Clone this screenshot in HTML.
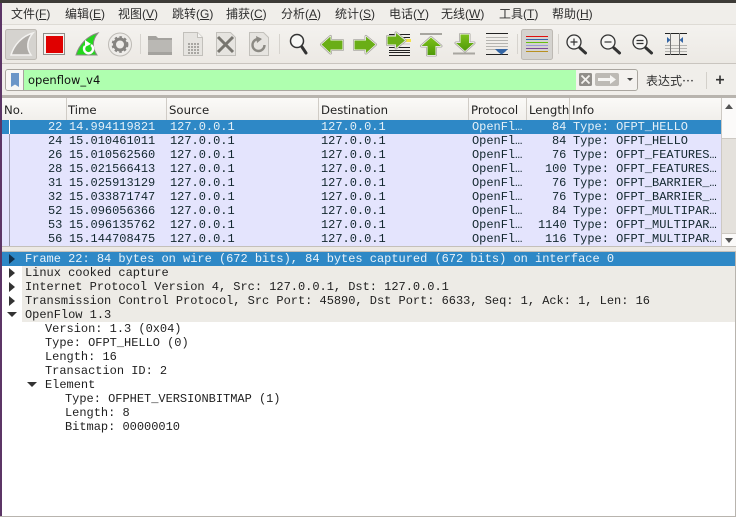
<!DOCTYPE html>
<html><head><meta charset="utf-8">
<style>
*{box-sizing:border-box}
html,body{margin:0;padding:0}
body{width:736px;height:517px;overflow:hidden;position:relative;background:#fff;font-family:"Liberation Sans","Noto Sans CJK SC",sans-serif}
.a{position:absolute}
#menu span{position:absolute;top:3px;font-size:12px;line-height:16px;color:#2e2e2e;white-space:nowrap}
#menu u{text-decoration:underline;text-underline-offset:1px}
.h{position:absolute;top:98px;height:22px;font-family:"DejaVu Sans",sans-serif;font-size:11.7px;line-height:24px;color:#222;background:linear-gradient(#fbfaf8,#f1efeb);border-right:1px solid #d0ccc6;white-space:nowrap;overflow:hidden}
.r{position:absolute;left:2px;width:719px;height:14px;background:#e4e4fd;font:12px/14px "Liberation Mono",monospace;letter-spacing:-.018px;color:#12272e}
.r.s{background:#2e88c6;color:#e6f1f8}
.r span{position:absolute;top:0;white-space:pre}
.d{position:absolute;font:12px/14px "Liberation Mono",monospace;letter-spacing:-.018px;color:#1f1f1f;white-space:pre;height:14px}
.tri{position:absolute;width:0;height:0}
.rt{border-left:6px solid #333;border-top:5px solid transparent;border-bottom:5px solid transparent;left:9px}
.dn{border-top:5px solid #333;border-left:5px solid transparent;border-right:5px solid transparent}
.o{fill:none;stroke:#a9a7a1;stroke-width:3;stroke-linejoin:round}
.w{fill:none;stroke:#f6f5f2;stroke-width:1.400;stroke-linejoin:round}
</style></head><body>
<div class="a" style="left:0;top:0;width:736px;height:3px;background:#3d3b37"></div>
<div class="a" style="left:0;top:3px;width:2px;height:514px;background:#5c3566"></div>
<div class="a" id="menu" style="left:2px;top:3px;width:734px;height:22px;background:#f0eeea">
<span style="left:9px">文件(<u>F</u>)</span><span style="left:63px">编辑(<u>E</u>)</span><span style="left:116px">视图(<u>V</u>)</span><span style="left:170px">跳转(<u>G</u>)</span><span style="left:224px">捕获(<u>C</u>)</span><span style="left:279px">分析(<u>A</u>)</span><span style="left:333px">统计(<u>S</u>)</span><span style="left:387px">电话(<u>Y</u>)</span><span style="left:439px">无线(<u>W</u>)</span><span style="left:497px">工具(<u>T</u>)</span><span style="left:550px">帮助(<u>H</u>)</span>
</div>
<div class="a" style="left:2px;top:24px;width:734px;height:40px;background:linear-gradient(#f4f2ef,#ece9e4);border-top:1px solid #dedbd5;border-bottom:1px solid #c9c5bf"></div>

<svg class="a" style="left:0;top:25px" width="736" height="38" viewBox="0 25 736 38">
<defs>
<path id="back" d="M321.500 44.500 L330.500 36.500 V40.500 H342.500 V49.500 H330.500 V53 Z"/>
<path id="fwd" d="M375.500 44.500 L366 36.500 V40.500 H354.500 V49.500 H366 V53 Z"/>
<path id="goto" d="M405 40.500 L396 33 V36.500 H387.500 V44.500 H396 V48 Z"/>
<path id="first" d="M431 37.500 L421.500 46 H427.500 V55 H435.500 V46 H441 Z"/>
<path id="last" d="M465 51 L456 43 H460.500 V34.500 H469 V43 H474 Z"/>
<linearGradient id="g1" x1="0" y1="0" x2="0" y2="1"><stop offset="0" stop-color="#7cc01c"/><stop offset="1" stop-color="#4f9a08"/></linearGradient>
</defs>
<!-- shark selected -->
<rect x="5.500" y="29.500" width="31" height="30" rx="2" fill="#d5d3cf" stroke="#bdb9b3"/>
<path d="M11 55 C14 45 22 36 33 33 C27 40 26 48 31 55 Z" fill="#aeaba7" stroke="#f3f2f0" stroke-width="1.500"/>
<!-- stop -->
<rect x="43.500" y="33.500" width="21" height="21" fill="#f4f2ef" stroke="#8f8c88"/>
<rect x="46" y="36" width="17" height="17" fill="#e00000"/>
<!-- restart -->
<path d="M76 55 C79 45 87 36 98 33 C92 40 92 48 97 55 Z" fill="#22d81c" stroke="#8a8a84" stroke-width="1"/>
<path d="M85 46 a4.500 4.500 0 1 0 6 -1" fill="none" stroke="#fff" stroke-width="2.400"/>
<path d="M85 40 l6 4 -6 3z" fill="#fff"/>
<!-- gear -->
<circle cx="120" cy="44.500" r="11.500" fill="#eeece9" stroke="#bdbab5" stroke-width="1"/>
<circle cx="120" cy="44.500" r="5.500" fill="none" stroke="#868481" stroke-width="3"/>
<circle cx="120" cy="44.500" r="7.600" fill="none" stroke="#868481" stroke-width="1.600" stroke-dasharray="2.600 2.400"/>
<line x1="140.500" y1="34" x2="140.500" y2="54" stroke="#d6d3ce"/>
<!-- folder -->
<path d="M148 36 h8 l2 2 h14 v5 h-24z" fill="#a4a29e"/>
<rect x="148" y="40" width="24" height="15" fill="#bab8b4"/>
<rect x="148" y="52" width="24" height="3" fill="#a4a29e"/>
<!-- file -->
<path d="M183.500 32.500 h14 l5 5 v18 h-19z" fill="#e6e4e0" stroke="#c2c0bb"/>
<path d="M197.500 32.500 v5 h5" fill="#f5f4f2" stroke="#c2c0bb"/>
<path d="M188 44 h11 M188 47 h11 M188 50 h11 M188 53 h11" stroke="#a8a6a2" stroke-width="2" stroke-dasharray="2 1"/>
<!-- close file -->
<path d="M216.500 32.500 h14 l5 5 v18 h-19z" fill="#e6e4e0" stroke="#c2c0bb"/>
<path d="M218 37 L233 52 M233 37 L218 52" stroke="#77756f" stroke-width="3"/>
<!-- reload file -->
<path d="M249.500 32.500 h14 l5 5 v18 h-19z" fill="#e6e4e0" stroke="#c2c0bb"/>
<circle cx="258.500" cy="45" r="6" fill="none" stroke="#8c8a84" stroke-width="2.400" stroke-dasharray="30 8"/>
<path d="M256 36 l6 3 -5 4z" fill="#8c8a84"/>
<line x1="279.500" y1="34" x2="279.500" y2="54" stroke="#d6d3ce"/>
<!-- search -->
<circle cx="297" cy="41" r="6.500" fill="#f8f8f6" stroke="#333" stroke-width="1.500"/>
<path d="M302 47 L306 53" stroke="#333" stroke-width="3" stroke-linecap="round"/>
<!-- back -->
<use href="#back" class="o"/><use href="#back" class="w"/><use href="#back" fill="#6aae16"/>
<!-- forward -->
<use href="#fwd" class="o"/><use href="#fwd" class="w"/><use href="#fwd" fill="#6aae16"/>
<!-- goto -->
<path d="M389 34.500 h21 M389 37.500 h21 M389 47.500 h21 M389 50.500 h21 M389 52.500 h21 M389 55.500 h21" stroke="#222" stroke-width="1"/>
<path d="M389 41 h21 M389 44 h21" stroke="#c8c6c2" stroke-width="1"/>
<rect x="404" y="39" width="7" height="3" fill="#f2e24a"/>
<use href="#goto" class="o"/><use href="#goto" class="w"/><use href="#goto" fill="#6aae16"/>
<!-- first -->
<path d="M420 34 h22" stroke="#a8a6a0" stroke-width="2"/>
<use href="#first" class="o"/><use href="#first" class="w"/><use href="#first" fill="url(#g1)"/>
<!-- last -->
<path d="M453 53.500 h22" stroke="#a8a6a0" stroke-width="2"/>
<use href="#last" class="o"/><use href="#last" class="w"/><use href="#last" fill="url(#g1)"/>
<!-- autoscroll -->
<path d="M486 33.500 h22 M486 54.500 h22" stroke="#222" stroke-width="1"/>
<path d="M486 37.500 h22 M486 40.500 h22 M486 43.500 h22 M486 46.500 h22 M486 49.500 h22" stroke="#b5b4b0" stroke-width="1"/>
<path d="M495 49 h13 l-3 3 -3.500 2.500 -3.500 -2.500z" fill="#3566a5"/>
<line x1="517.500" y1="34" x2="517.500" y2="54" stroke="#d6d3ce"/>
<!-- colorize -->
<rect x="521.500" y="29.500" width="31" height="30" rx="2" fill="#d5d3cf" stroke="#bdb9b3"/>
<path d="M526 36.500h22" stroke="#e01010"/><path d="M526 39.500h22" stroke="#3564a8"/>
<path d="M526 42.500h22" stroke="#66c010"/><path d="M526 45.500h22" stroke="#9c9cd8"/><path d="M526 48.500h22" stroke="#7b4a98"/><path d="M526 51.500h22" stroke="#b89020"/>
<line x1="558.500" y1="34" x2="558.500" y2="54" stroke="#d6d3ce"/>
<!-- zoom in -->
<circle cx="574" cy="42" r="7" fill="#f6f5f3" stroke="#333" stroke-width="1.300"/>
<path d="M570.500 42 h7 M574 38.500 v7" stroke="#333" stroke-width="1.200"/>
<path d="M580 48 L585.500 53" stroke="#333" stroke-width="3" stroke-linecap="round"/>
<!-- zoom out -->
<circle cx="608" cy="42" r="7" fill="#f6f5f3" stroke="#333" stroke-width="1.300"/>
<path d="M604.500 42 h7" stroke="#333" stroke-width="1.200"/>
<path d="M614 48 L619.500 53" stroke="#333" stroke-width="3" stroke-linecap="round"/>
<!-- zoom 100 -->
<circle cx="640" cy="42" r="7" fill="#f6f5f3" stroke="#333" stroke-width="1.300"/>
<path d="M636.500 40.500 h7 M636.500 43.500 h7" stroke="#333" stroke-width="1.200"/>
<path d="M646 48 L651.500 53" stroke="#333" stroke-width="3" stroke-linecap="round"/>
<!-- resize -->
<path d="M665 33.500 h22 M665 54.500 h22" stroke="#222" stroke-width="1"/>
<path d="M665 45.500 h22 M665 48.500 h22 M665 51.500 h22" stroke="#b5b4b0"/>
<path d="M670.500 33 V55 M679.500 33 V55" stroke="#777" stroke-width="1"/>
<path d="M667 37 l3.500 3 -3.500 3z M683 37 l-3.500 3 3.500 3z" fill="#3566a5"/>
</svg>

<!-- filter bar -->
<div class="a" style="left:2px;top:64px;width:734px;height:34px;background:#f0eeea;border-bottom:3px solid #b8b4ae"></div>
<div class="a" style="left:5px;top:69px;width:633px;height:22px;border:1px solid #aaa6a0;border-radius:3px;background:#afffaf;overflow:hidden">
<div class="a" style="left:0;top:0;width:18px;height:20px;background:#f8f7f5;border-right:1px solid #a8a49e"></div>
<svg class="a" style="left:4px;top:3px" width="10" height="15"><path d="M1 0 H9 V14 L5 11.500 L1 14Z" fill="#6c96c8"/></svg>
<div class="a" style="left:22px;top:1px;font-family:'DejaVu Sans',sans-serif;font-size:11.500px;line-height:18px;color:#111">openflow_v4</div>
<div class="a" style="left:570px;top:0;width:62px;height:20px;background:#f4f2ef"></div>
<svg class="a" style="left:571px;top:2px" width="60" height="18">
<rect x="2" y="1" width="13" height="13" rx="1.500" fill="#908d89"/>
<path d="M4.500 3.500 L12.500 11.500 M12.500 3.500 L4.500 11.500" stroke="#f4f2ef" stroke-width="1.800"/>
<rect x="18" y="1" width="24" height="13" rx="2" fill="#bdbab5"/>
<path d="M21 6 H33 V3 L39 7.500 L33 12 V9 H21Z" fill="#f6f5f3"/>
<path d="M50 6 h6 l-3 3z" fill="#444"/>
</svg>
</div>
<div class="a" style="left:646px;top:73px;font-size:12px;line-height:17px;color:#2e2e2e;white-space:nowrap">表达式⋯</div>
<div class="a" style="left:706px;top:72px;width:1px;height:17px;background:#d3d0ca"></div>
<svg class="a" style="left:715px;top:75px" width="10" height="10"><path d="M5 0.500 V9 M1 4.700 H9" stroke="#333" stroke-width="1.600"/></svg>

<!-- packet list -->
<div class="h" style="left:2px;width:65px;padding-left:2px">No.</div>
<div class="h" style="left:67px;width:100px;padding-left:1px">Time</div>
<div class="h" style="left:167px;width:152px;padding-left:2px">Source</div>
<div class="h" style="left:319px;width:150px;padding-left:2px">Destination</div>
<div class="h" style="left:469px;width:58px;padding-left:2px">Protocol</div>
<div class="h" style="left:527px;width:43px;padding-left:2px">Length</div>
<div class="h" style="left:570px;width:151px;padding-left:2px;border-right:0">Info</div>
<div class="a" style="left:721px;top:98px;width:15px;height:149px;background:#e4e1dc;border-left:1px solid #cdc9c3"></div>
<div class="a" style="left:722px;top:98px;width:14px;height:41px;background:#fbfaf9;border-bottom:1px solid #cdc9c3"></div>
<div class="a" style="left:722px;top:233px;width:14px;height:14px;background:#fbfaf9;border-top:1px solid #cdc9c3"></div>
<div class="tri" style="left:725px;top:104px;border-bottom:5px solid #555;border-left:4px solid transparent;border-right:4px solid transparent"></div>
<div class="tri" style="left:725px;top:238px;border-top:5px solid #555;border-left:4px solid transparent;border-right:4px solid transparent"></div>

<div class="r s" style="top:120px"><span style="left:46px">22</span><span style="left:67px">14.994119821</span><span style="left:168px">127.0.0.1</span><span style="left:319px">127.0.0.1</span><span style="left:470px">OpenFl…</span><span style="left:550px">84</span><span style="left:571px">Type: OFPT_HELLO</span></div>
<div class="r" style="top:134px"><span style="left:46px">24</span><span style="left:67px">15.010461011</span><span style="left:168px">127.0.0.1</span><span style="left:319px">127.0.0.1</span><span style="left:470px">OpenFl…</span><span style="left:550px">84</span><span style="left:571px">Type: OFPT_HELLO</span></div>
<div class="r" style="top:148px"><span style="left:46px">26</span><span style="left:67px">15.010562560</span><span style="left:168px">127.0.0.1</span><span style="left:319px">127.0.0.1</span><span style="left:470px">OpenFl…</span><span style="left:550px">76</span><span style="left:571px">Type: OFPT_FEATURES…</span></div>
<div class="r" style="top:162px"><span style="left:46px">28</span><span style="left:67px">15.021566413</span><span style="left:168px">127.0.0.1</span><span style="left:319px">127.0.0.1</span><span style="left:470px">OpenFl…</span><span style="left:543px">100</span><span style="left:571px">Type: OFPT_FEATURES…</span></div>
<div class="r" style="top:176px"><span style="left:46px">31</span><span style="left:67px">15.025913129</span><span style="left:168px">127.0.0.1</span><span style="left:319px">127.0.0.1</span><span style="left:470px">OpenFl…</span><span style="left:550px">76</span><span style="left:571px">Type: OFPT_BARRIER_…</span></div>
<div class="r" style="top:190px"><span style="left:46px">32</span><span style="left:67px">15.033871747</span><span style="left:168px">127.0.0.1</span><span style="left:319px">127.0.0.1</span><span style="left:470px">OpenFl…</span><span style="left:550px">76</span><span style="left:571px">Type: OFPT_BARRIER_…</span></div>
<div class="r" style="top:204px"><span style="left:46px">52</span><span style="left:67px">15.096056366</span><span style="left:168px">127.0.0.1</span><span style="left:319px">127.0.0.1</span><span style="left:470px">OpenFl…</span><span style="left:550px">84</span><span style="left:571px">Type: OFPT_MULTIPAR…</span></div>
<div class="r" style="top:218px"><span style="left:46px">53</span><span style="left:67px">15.096135762</span><span style="left:168px">127.0.0.1</span><span style="left:319px">127.0.0.1</span><span style="left:470px">OpenFl…</span><span style="left:536px">1140</span><span style="left:571px">Type: OFPT_MULTIPAR…</span></div>
<div class="r" style="top:232px"><span style="left:46px">56</span><span style="left:67px">15.144708475</span><span style="left:168px">127.0.0.1</span><span style="left:319px">127.0.0.1</span><span style="left:470px">OpenFl…</span><span style="left:543px">116</span><span style="left:571px">Type: OFPT_MULTIPAR…</span></div>
<div class="a" style="left:9px;top:120px;width:1px;height:127px;background:#9a9aae"></div>
<div class="a" style="left:9px;top:120px;width:1px;height:14px;background:#fff"></div>
<div class="a" style="left:2px;top:246px;width:734px;height:6px;background:#ece9e4;border-top:1px solid #c4c0ba;border-bottom:1px solid #c4c0ba"></div>

<!-- details -->
<div class="a" style="left:22px;top:266px;width:713px;height:56px;background:#edebe6"></div>
<div class="a" style="left:2px;top:252px;width:733px;height:14px;background:#2e88c6"></div>
<div class="a" style="left:735px;top:252px;width:1px;height:265px;background:#b8b4ae"></div>
<div class="a" style="left:0;top:516px;width:736px;height:1px;background:#b8b4ae"></div>
<div class="tri rt" style="top:254px;border-left-color:#12304a"></div>
<div class="tri rt" style="top:268px"></div>
<div class="tri rt" style="top:282px"></div>
<div class="tri rt" style="top:296px"></div>
<div class="tri dn" style="left:7px;top:312px"></div>
<div class="d" style="left:25px;top:252px;color:#e8f2f9">Frame 22: 84 bytes on wire (672 bits), 84 bytes captured (672 bits) on interface 0</div>
<div class="d" style="left:25px;top:266px">Linux cooked capture</div>
<div class="d" style="left:25px;top:280px">Internet Protocol Version 4, Src: 127.0.0.1, Dst: 127.0.0.1</div>
<div class="d" style="left:25px;top:294px">Transmission Control Protocol, Src Port: 45890, Dst Port: 6633, Seq: 1, Ack: 1, Len: 16</div>
<div class="d" style="left:25px;top:308px">OpenFlow 1.3</div>
<div class="d" style="left:45px;top:322px">Version: 1.3 (0x04)</div>
<div class="d" style="left:45px;top:336px">Type: OFPT_HELLO (0)</div>
<div class="d" style="left:45px;top:350px">Length: 16</div>
<div class="d" style="left:45px;top:364px">Transaction ID: 2</div>
<div class="tri dn" style="left:27px;top:382px"></div>
<div class="d" style="left:45px;top:378px">Element</div>
<div class="d" style="left:65px;top:392px">Type: OFPHET_VERSIONBITMAP (1)</div>
<div class="d" style="left:65px;top:406px">Length: 8</div>
<div class="d" style="left:65px;top:420px">Bitmap: 00000010</div>
</body></html>
